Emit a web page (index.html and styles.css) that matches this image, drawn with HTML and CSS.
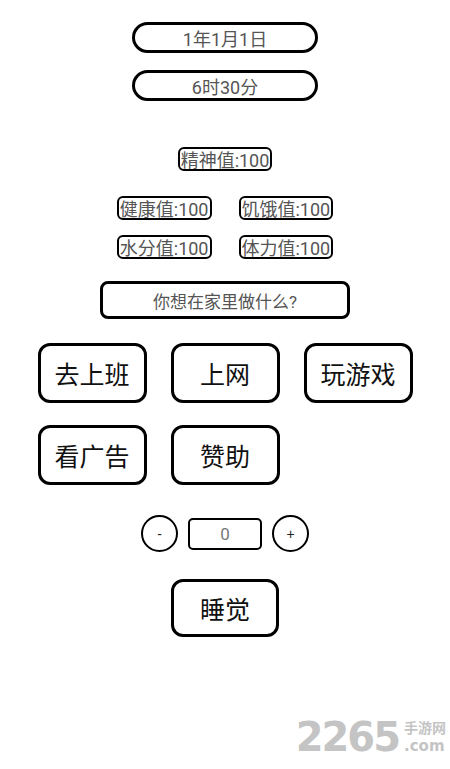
FILE: index.html
```html
<!DOCTYPE html>
<html lang="zh-CN">
<head>
    <meta charset="UTF-8">
    <meta name="viewport" content="width=device-width, initial-scale=1.0">
    <title>在家</title>
    <link rel="stylesheet" href="styles.css">
</head>
<body>
    <div class="page">
        <div class="pill">1年1月1日</div>
        <div class="pill time">6时30分</div>

        <div class="stats first">
            <span class="stat">精神值:100</span>
        </div>
        <div class="stats row">
            <span class="stat">健康值:100</span>
            <span class="stat">饥饿值:100</span>
        </div>
        <div class="stats row small-gap">
            <span class="stat">水分值:100</span>
            <span class="stat">体力值:100</span>
        </div>

        <div class="question">你想在家里做什么?</div>

        <div class="actions">
            <button class="action">去上班</button>
            <button class="action">上网</button>
            <button class="action">玩游戏</button>
            <button class="action">看广告</button>
            <button class="action">赞助</button>
        </div>

        <div class="stepper">
            <button class="round">-</button>
            <div class="count">0</div>
            <button class="round">+</button>
        </div>

        <button class="action sleep">睡觉</button>
    </div>

    <div class="watermark">
        <span class="wm-num">2265</span>
        <span class="wm-side">
            <span class="wm-cn">手游网</span>
            <span class="wm-com">.com</span>
        </span>
    </div>
</body>
</html>
```

FILE: styles.css
```css
body {
    margin: 0;
    background: #ffffff;
    font-family: Roboto, "Noto Sans CJK SC", sans-serif;
    color: #555;
}
.page {
    display: flex;
    flex-direction: column;
    align-items: center;
    padding-top: 22px;
}
.pill {
    box-sizing: border-box;
    width: 186px;
    height: 31px;
    border: 3px solid #000;
    border-radius: 16px;
    display: flex;
    align-items: center;
    justify-content: center;
    font-size: 18px;
    color: #555;
}
.pill.time {
    margin-top: 17px;
}
.stats {
    display: flex;
    justify-content: center;
    gap: 27px;
}
.stats.first {
    margin-top: 46px;
}
.stats.row {
    margin-top: 25px;
}
.stats.row.small-gap {
    margin-top: 15px;
}
.stat {
    box-sizing: border-box;
    height: 24px;
    border: 2px solid #000;
    border-radius: 6px;
    padding: 0 1px;
    display: flex;
    align-items: center;
    font-size: 18px;
    color: #555;
}
.question {
    box-sizing: border-box;
    margin-top: 22px;
    width: 250px;
    height: 38px;
    border: 3px solid #000;
    border-radius: 8px;
    display: flex;
    align-items: center;
    justify-content: center;
    font-size: 17px;
    color: #555;
}
.actions {
    margin-top: 24px;
    width: 375px;
    display: flex;
    flex-wrap: wrap;
    column-gap: 24px;
    row-gap: 22px;
}
.action {
    box-sizing: border-box;
    width: 109px;
    height: 60px;
    border: 3px solid #000;
    border-radius: 12px;
    background: #fff;
    font-family: "Noto Sans CJK SC", sans-serif;
    font-size: 25px;
    color: #111;
    padding: 0;
}
.stepper {
    margin-top: 30px;
    display: flex;
    align-items: center;
    gap: 10px;
}
.round {
    box-sizing: border-box;
    width: 37px;
    height: 37px;
    border: 2px solid #000;
    border-radius: 50%;
    background: #fff;
    font-size: 14px;
    color: #222;
    padding: 0;
}
.count {
    box-sizing: border-box;
    width: 74px;
    height: 32px;
    border: 2px solid #000;
    border-radius: 5px;
    display: flex;
    align-items: center;
    justify-content: center;
    font-size: 17px;
    color: #777;
}
.action.sleep {
    margin-top: 27px;
    width: 108px;
    height: 58px;
}
.watermark {
    position: absolute;
    right: 4px;
    top: 714px;
    display: flex;
    align-items: flex-end;
    color: #c4c4c4;
}
.wm-num {
    font-family: "DejaVu Sans", sans-serif;
    font-weight: bold;
    font-size: 40px;
    letter-spacing: -2px;
    line-height: 46px;
}
.wm-side {
    display: flex;
    flex-direction: column;
    gap: 3px;
    margin-left: 5px;
    margin-bottom: 6px;
}
.wm-cn {
    font-family: "Noto Sans CJK SC", sans-serif;
    font-size: 14px;
    line-height: 15px;
    font-weight: bold;
}
.wm-com {
    font-family: "DejaVu Sans", sans-serif;
    font-size: 15px;
    line-height: 16px;
    font-weight: bold;
}
```
